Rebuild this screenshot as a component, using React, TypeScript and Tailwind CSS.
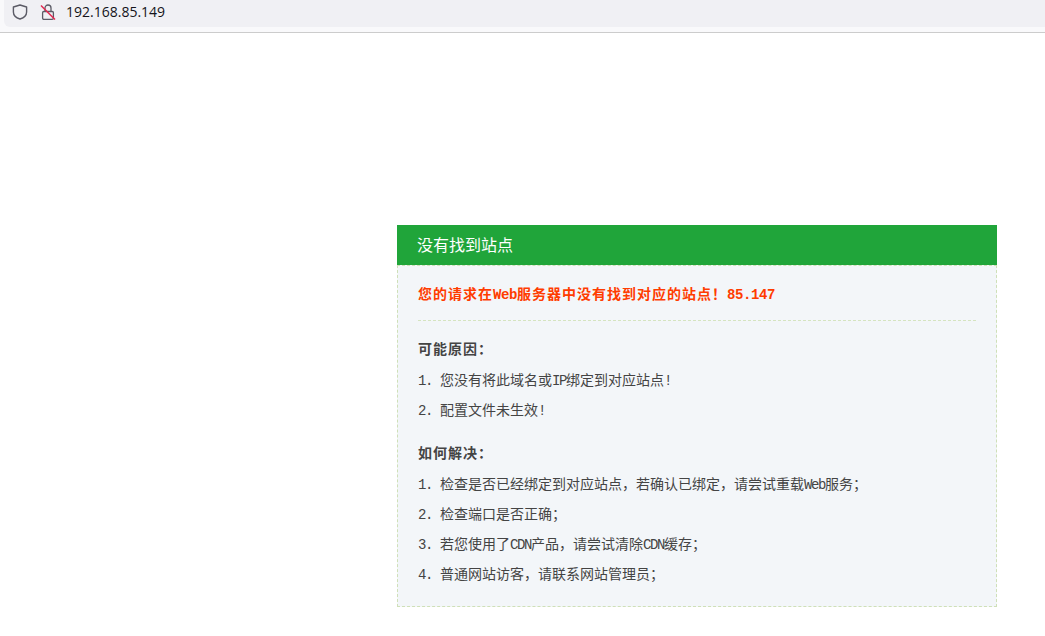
import React from 'react';

const mono = "font-['Liberation_Mono',monospace]";

// full-width punctuation, written as escapes so it can't turn into the ascii forms
const COMMA = '\uFF0C';
const SEMI = '\uFF1B';
const COLON = '\uFF1A';
const BANG = '\uFF01';

// Latin in the page is half-width: 7px a character at 14px
const Latin: React.FC<{ children: React.ReactNode }> = ({ children }) => (
  <span className={`${mono} tracking-[-1.4px]`}>{children}</span>
);

// bold text runs 1px wider per glyph, so 8px a character here
const BoldLatin: React.FC<{ children: React.ReactNode }> = ({ children }) => (
  <span className={`${mono} tracking-[-0.4px]`}>{children}</span>
);

const Item: React.FC<{ n: number; children: React.ReactNode }> = ({ n, children }) => (
  <li className="flex h-[30px] items-baseline text-[14px] leading-[30px] text-[#444]">
    <span className={`${mono} w-[22px] tracking-[-1.4px]`}>{n}.</span>
    <span>{children}</span>
  </li>
);

export default function App() {
  return (
    <div className="min-h-[636px] bg-white font-['Noto_Sans_CJK_SC','Noto_Sans',sans-serif]">
      <div className="h-[33px] border-b border-[#cccccc] bg-[#f9f9fb] pl-[4px]">
        <div className="flex h-[27px] items-center rounded-bl-[6px] bg-[#f0f0f4] pb-[4px] pl-[8px]">
          <svg width="16" height="16" viewBox="0 0 16 16" fill="none" stroke="#5b5b66" strokeWidth="1.4">
            <path d="M8 1 14.6 3V8c0 3.4-2.6 5.8-6.6 7C4 13.8 1.4 11.4 1.4 8V3Z" strokeLinejoin="round" />
          </svg>
          <svg className="ml-[12px]" width="16" height="16" viewBox="0 0 16 16" fill="none">
            <path d="M5 7.5V4a3 3 0 0 1 6 0V7.5" stroke="#5b5b66" strokeWidth="1.3" />
            <rect x="2.6" y="7.5" width="10.8" height="7.8" rx="1.2" stroke="#5b5b66" strokeWidth="1.3" />
            <path d="M1 1.5 15 15.5" stroke="#e22850" strokeWidth="1.5" />
          </svg>
          <span className="ml-[10px] font-['Open_Sans',sans-serif] text-[14px] text-[#15141a]">192.168.85.149</span>
        </div>
      </div>

      <div className="ml-[397px] mt-[192px] w-[600px]">
        <div className="h-[40px] bg-[#20a53a] pl-[20px] text-[16px] leading-[39px] text-white">没有找到站点</div>
        <div className="border border-dashed border-[#cfe0b8] bg-[#f3f6f9] px-[20px] pt-[12px] pb-[18px]">
          <div className="box-content h-[30px] border-b border-dashed border-[#d5e4c0] pb-[12px] text-[14px] font-bold leading-[30px] tracking-[1px] text-[#ff3c00]">
            您的请求在<BoldLatin>Web</BoldLatin>服务器中没有找到对应的站点{BANG}<BoldLatin>85.147</BoldLatin>
          </div>
          <h3 className="mb-[1px] mt-[12px] text-[14px] font-bold leading-[30px] tracking-[1px] text-[#444]">可能原因{COLON}</h3>
          <ul>
            <Item n={1}>您没有将此域名或<Latin>IP</Latin>绑定到对应站点<Latin>!</Latin></Item>
            <Item n={2}>配置文件未生效<Latin>!</Latin></Item>
          </ul>
          <h3 className="mb-[1px] mt-[13px] text-[14px] font-bold leading-[30px] tracking-[1px] text-[#444]">如何解决{COLON}</h3>
          <ul>
            <Item n={1}>检查是否已经绑定到对应站点{COMMA}若确认已绑定{COMMA}请尝试重载<Latin>Web</Latin>服务{SEMI}</Item>
            <Item n={2}>检查端口是否正确{SEMI}</Item>
            <Item n={3}>若您使用了<Latin>CDN</Latin>产品{COMMA}请尝试清除<Latin>CDN</Latin>缓存{SEMI}</Item>
            <Item n={4}>普通网站访客{COMMA}请联系网站管理员{SEMI}</Item>
          </ul>
        </div>
      </div>
    </div>
  );
}
